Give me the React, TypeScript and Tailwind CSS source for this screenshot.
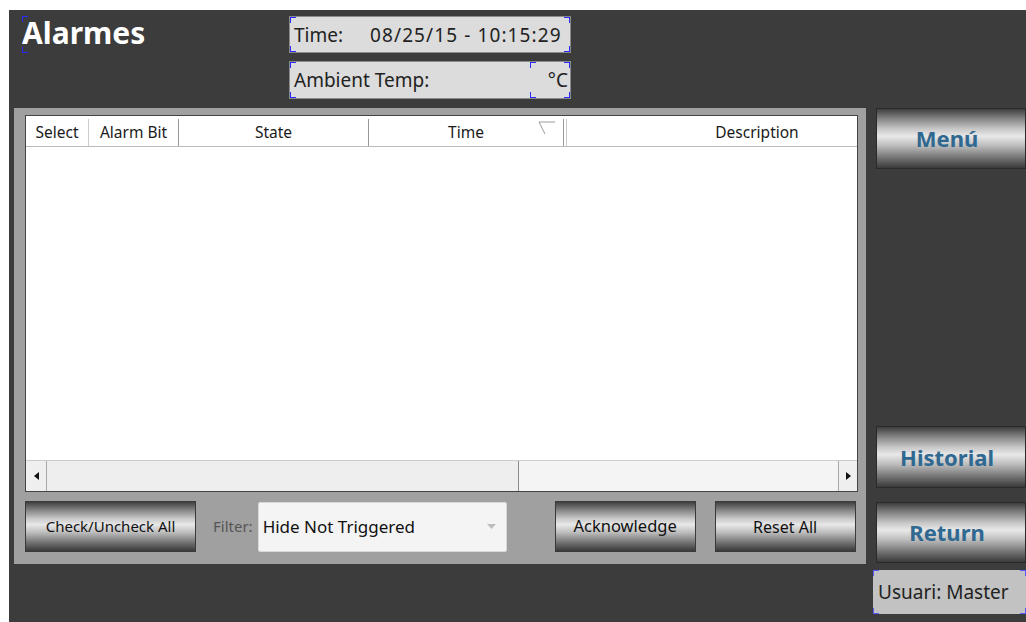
import React from "react";

const metal =
  "bg-[linear-gradient(to_bottom,#3e3e3e_0%,#7a7a7a_14%,#c8c8c8_34%,#e8e8e8_46%,#bdbdbd_62%,#6e6e6e_84%,#3a3a3a_100%)]";

function Corners({ color = "border-[#2a2aff]" }: { color?: string }) {
  return (
    <>
      <span className={`absolute left-0 top-0 h-[6px] w-[6px] border-l border-t ${color}`} />
      <span className={`absolute right-0 top-0 h-[6px] w-[6px] border-r border-t ${color}`} />
      <span className={`absolute left-0 bottom-0 h-[6px] w-[6px] border-l border-b ${color}`} />
      <span className={`absolute right-0 bottom-0 h-[6px] w-[6px] border-r border-b ${color}`} />
    </>
  );
}

function SideButton({ label, className = "" }: { label: string; className?: string }) {
  return (
    <div
      className={`flex h-[61px] w-full items-center justify-center border border-[#2a2a2a] pr-[8px] ${metal} ${className}`}
    >
      <span className="text-[22px] font-bold text-[#2f6890]">{label}</span>
    </div>
  );
}

function PanelButton({
  label,
  className = "",
  textClass = "text-[15px]",
}: {
  label: string;
  className?: string;
  textClass?: string;
}) {
  return (
    <div
      className={`flex h-[51px] items-center justify-center border border-[#3a3a3a] ${metal} ${className}`}
    >
      <span className={`${textClass} text-[#111]`}>{label}</span>
    </div>
  );
}

export default function App() {
  return (
    <div
      className="h-[622px] w-[1026px] overflow-hidden bg-white pl-[9px] pt-[10px]"
      style={{ fontFamily: '"Noto Sans", "DejaVu Sans", sans-serif' }}
    >
      <div className="flex h-[612px] w-[1017px] flex-col bg-[#3c3c3c]">
        {/* header */}
        <div className="flex h-[98px] shrink-0">
          <div className="relative ml-[13px] mt-[6px] h-[37px] w-[130px]">
            <span className="absolute left-0 top-0 h-[6px] w-[6px] border-l border-t border-[#2a2aff]" />
            <span className="absolute left-0 bottom-0 h-[6px] w-[6px] border-l border-b border-[#2a2aff]" />
            <span className="absolute left-0 top-[-1px] text-[30px] font-bold leading-[36px] text-white">
              Alarmes
            </span>
          </div>
          <div className="ml-[137px] mt-[6px] flex flex-col gap-[8px]">
            <div className="relative flex h-[37px] w-[282px] items-center border border-[#8a8a8a] bg-[#dcdcdc] pl-[4px] pt-[1px] text-[19px] text-[#222]">
              <Corners />
              <span>Time:</span>
              <span className="ml-[27px] tracking-[1.1px]">08/25/15 - 10:15:29</span>
            </div>
            <div className="relative flex h-[38px] w-[282px] items-center border border-[#8a8a8a] bg-[#dcdcdc] pl-[4px] text-[19px] text-[#222]">
              <Corners />
              <span>Ambient Temp:</span>
              <div className="relative ml-auto flex h-full w-[40px] items-center justify-end pr-[2px]">
                <Corners />
                <span>°C</span>
              </div>
            </div>
          </div>
        </div>

        {/* body */}
        <div className="flex flex-1">
          {/* alarm panel */}
          <div className="ml-[5px] flex h-[456px] w-[852px] flex-col bg-[#a0a0a0] pl-[11px] pt-[7px]">
            <div className="flex h-[377px] w-[833px] flex-col border border-[#444] bg-white">
              {/* column headers */}
              <div className="flex h-[31px] border-b border-[#bbb] pt-[3px] text-[15.5px] text-[#1a1a1a]">
                <div className="flex w-[63px] items-center justify-center border-r border-[#ccc] bg-white">Select</div>
                <div className="flex w-[90px] items-center justify-center border-r border-[#999]">Alarm Bit</div>
                <div className="flex w-[190px] items-center justify-center border-r border-[#999]">State</div>
                <div className="relative flex w-[195px] items-center justify-center border-r border-[#999]">
                  Time
                  <svg className="absolute right-[7px] top-[2px]" width="18" height="14" viewBox="0 0 18 14">
                    <path d="M1 1 H17 M1 1 L7 13" stroke="#9a9a9a" strokeWidth="1" fill="none" />
                  </svg>
                </div>
                <div className="ml-[2px] flex flex-1 items-center justify-center border-l border-[#ccc] pl-[90px]">
                  Description
                </div>
              </div>
              <div className="flex-1" />
              {/* horizontal scrollbar */}
              <div className="flex h-[31px] border-t border-[#ccc] bg-[#f0f0f0]">
                <div className="flex w-[21px] items-center justify-center border-r border-[#aaa] bg-[#efefef]">
                  <svg width="5" height="8" viewBox="0 0 5 8">
                    <path d="M5 0 L0 4 L5 8 Z" fill="#111" />
                  </svg>
                </div>
                <div className="w-[472px] border-r border-[#8a8a8a] bg-[#eeeeee]" />
                <div className="flex-1 bg-[#f4f4f4]" />
                <div className="flex w-[19px] items-center justify-center border-l border-[#aaa] bg-[#efefef]">
                  <svg width="5" height="8" viewBox="0 0 5 8">
                    <path d="M0 0 L5 4 L0 8 Z" fill="#111" />
                  </svg>
                </div>
              </div>
            </div>

            {/* controls */}
            <div className="mt-[9px] flex items-center">
              <PanelButton label="Check/Uncheck All" className="w-[171px]" />
              <span className="ml-[17px] text-[15px] text-[#555]">Filter:</span>
              <div className="ml-[5px] flex h-[50px] w-[249px] items-center rounded-[2px] border border-[#d8d8d8] bg-[#f4f4f4] pl-[4px] text-[17px] text-[#111]">
                <span>Hide Not Triggered</span>
                <svg className="ml-auto mr-[10px]" width="9" height="5" viewBox="0 0 9 5">
                  <path d="M0 0 H9 L4.5 5 Z" fill="#bdbdbd" />
                </svg>
              </div>
              <PanelButton label="Acknowledge" className="ml-[48px] w-[141px]" textClass="text-[16.5px]" />
              <PanelButton label="Reset All" className="ml-[19px] w-[141px]" textClass="text-[16px]" />
            </div>
          </div>

          {/* side navigation */}
          <div className="ml-[10px] flex flex-1 flex-col">
            <SideButton label="Menú" />
            <SideButton label="Historial" className="mt-[257px] h-[62px]" />
            <SideButton label="Return" className="mt-[14px]" />
            <div className="relative ml-[-3px] mt-[7px] flex h-[44px] w-[153px] items-center bg-[#c2c2c2] pl-[5px] text-[19px] text-[#222]">
              <Corners color="border-[#5a5aff]" />
              Usuari: Master
            </div>
          </div>
        </div>
      </div>
    </div>
  );
}
